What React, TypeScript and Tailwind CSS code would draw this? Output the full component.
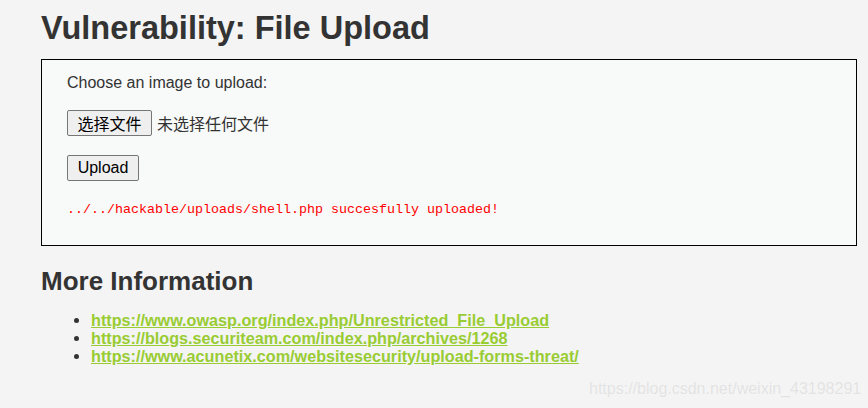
import React from 'react';

const links = [
  'https://www.owasp.org/index.php/Unrestricted_File_Upload',
  'https://blogs.securiteam.com/index.php/archives/1268',
  'https://www.acunetix.com/websitesecurity/upload-forms-threat/',
];

export default function App() {
  return (
    <div className="relative min-h-screen bg-[#f4f4f4] text-[#333] font-['Liberation_Sans','Noto_Sans_CJK_SC',sans-serif] px-[41px] pt-[8px] pr-[11px] overflow-hidden">
      <h1 className="text-[32.5px] leading-[40px] font-bold mb-[11px]">Vulnerability: File Upload</h1>

      <div className="border border-black bg-[#f8f9f9] pl-[25px] pt-[13px] pb-[27px]">
        <p className="text-[16px] leading-[20px]">Choose an image to upload:</p>
        <div className="flex items-center mt-[17px] h-[26px]">
          <button className="w-[85px] h-[26px] border border-[#767676] rounded-[2px] bg-[#efefef] text-[16px] leading-none text-black font-['Noto_Sans_CJK_SC',sans-serif]">
            选择文件
          </button>
          <span className="ml-[5px] text-[16px] font-['Noto_Sans_CJK_SC',sans-serif]">未选择任何文件</span>
        </div>
        <button className="block mt-[19px] w-[72px] h-[26px] border border-[#767676] rounded-[2px] bg-[#efefef] text-[16px] leading-none text-black">
          Upload
        </button>
        <pre className="mt-[21px] text-[13.33px] leading-[16px] text-[#ff0000] font-['Liberation_Mono',monospace]">
          ../../hackable/uploads/shell.php succesfully uploaded!
        </pre>
      </div>

      <h2 className="mt-[20px] text-[26px] leading-[30px] font-bold">More Information</h2>
      <ul className="mt-[15px] pl-[50px] list-disc">
        {links.map((l) => (
          <li key={l} className="text-[16.2px] leading-[18px]">
            <a href="#" className="font-bold text-[#99cc33] underline">
              {l}
            </a>
          </li>
        ))}
      </ul>

      <div className="absolute left-[589px] top-[379px] text-[16px] leading-[20px] text-[#e2e2e2] [text-shadow:0_0_1px_#ffffff]">
        https://blog.csdn.net/weixin_43198291
      </div>
    </div>
  );
}
